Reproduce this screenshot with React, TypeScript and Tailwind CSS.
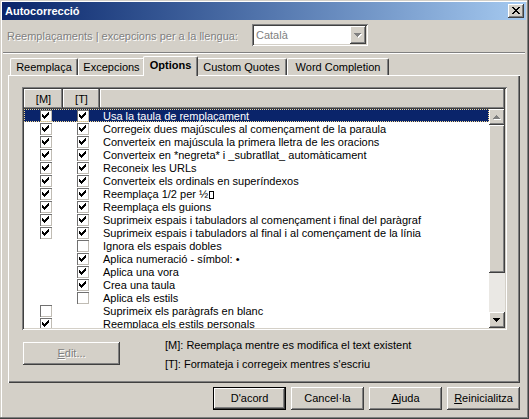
import type { ReactNode } from 'react'

const raised =
  'shadow-[inset_-1px_-1px_#404040,inset_1px_1px_#ffffff,inset_-2px_-2px_#808080,inset_2px_2px_#d4d0c8]'
const sunken =
  'shadow-[inset_1px_1px_#808080,inset_-1px_-1px_#ffffff,inset_2px_2px_#404040,inset_-2px_-2px_#d4d0c8]'
const disabledText = 'text-[#808080] [text-shadow:1px_1px_0_#ffffff]'

type Row = { m: boolean | null; t: boolean | null; label: ReactNode; selected?: boolean }

const rows: Row[] = [
  { m: true, t: true, label: 'Usa la taula de remplaçament', selected: true },
  { m: true, t: true, label: 'Corregeix dues majúscules al començament de la paraula' },
  { m: true, t: true, label: 'Converteix en majúscula la primera lletra de les oracions' },
  { m: true, t: true, label: 'Converteix en *negreta* i _subratllat_ automàticament' },
  { m: true, t: true, label: 'Reconeix les URLs' },
  { m: true, t: true, label: 'Converteix els ordinals en superíndexos' },
  {
    m: true,
    t: true,
    label: (
      <>
        Reemplaça 1/2 per ½
        <span className="ml-px inline-block h-[8px] w-[5px] border border-black bg-white align-[-1px]" />
      </>
    ),
  },
  { m: true, t: true, label: 'Reemplaça els guions' },
  { m: true, t: true, label: 'Suprimeix espais i tabuladors al començament i final del paràgraf' },
  { m: true, t: true, label: 'Suprimeix espais i tabuladors al final i al començament de la línia' },
  { m: null, t: false, label: 'Ignora els espais dobles' },
  { m: null, t: true, label: 'Aplica numeració - símbol: •' },
  { m: null, t: true, label: 'Aplica una vora' },
  { m: null, t: true, label: 'Crea una taula' },
  { m: null, t: false, label: 'Aplica els estils' },
  { m: false, t: null, label: 'Suprimeix els paràgrafs en blanc' },
  { m: true, t: null, label: 'Reemplaça els estils personals' },
]

// classic 7x7 check, one 3px column at a time
const checkCols = [4, 5, 6, 5, 4, 3, 2]

function Check({ on }: { on: boolean | null }) {
  if (on === null) return <div className="w-[12px] shrink-0" />
  return (
    <div className="h-[12px] w-[12px] shrink-0 bg-white shadow-[inset_1px_1px_#707070,inset_-1px_-1px_#c0bcb4]">
      {on && (
        <svg width="12" height="12" viewBox="0 0 12 12" shapeRendering="crispEdges">
          {checkCols.map((y, i) => (
            <rect key={i} x={2 + i} y={y} width="1" height="3" fill="#000" />
          ))}
        </svg>
      )}
    </div>
  )
}

function Arrow({ up, disabled }: { up?: boolean; disabled?: boolean }) {
  const bars = up
    ? [
        [7, 6, 1],
        [6, 7, 3],
        [5, 8, 5],
        [4, 9, 7],
      ]
    : [
        [4, 6, 7],
        [5, 7, 5],
        [6, 8, 3],
        [7, 9, 1],
      ]
  return (
    <svg width="16" height="16" viewBox="0 0 16 16" shapeRendering="crispEdges">
      {disabled &&
        bars.map(([x, y, w], i) => <rect key={'s' + i} x={x + 1} y={y + 1} width={w} height="1" fill="#fff" />)}
      {bars.map(([x, y, w], i) => (
        <rect key={i} x={x} y={y} width={w} height="1" fill={disabled ? '#808080' : '#000'} />
      ))}
    </svg>
  )
}

function Tab({ label, width, active }: { label: string; width: string; active?: boolean }) {
  if (active) {
    return (
      <div
        className={`relative z-10 -mx-[2px] -mb-px flex h-[20px] items-center justify-center rounded-t-[2px] border-l border-t border-white bg-[#d4d0c8] pb-[2px] font-bold shadow-[inset_-1px_0_#808080] [border-right:1px_solid_#404040] ${width}`}
      >
        {label}
      </div>
    )
  }
  return (
    <div
      className={`flex h-[17px] items-center justify-center rounded-t-[2px] border-l border-t border-white pt-px shadow-[inset_-1px_0_#808080] [border-right:1px_solid_#404040] ${width}`}
    >
      {label}
    </div>
  )
}

function Button({ children, isDefault }: { children: ReactNode; isDefault?: boolean }) {
  return (
    <div
      className={`flex h-[23px] w-[73px] items-center justify-center bg-[#d4d0c8] ${raised} ${
        isDefault ? 'border border-black' : ''
      }`}
    >
      {children}
    </div>
  )
}

export default function App() {
  return (
    <div className="h-[419px] w-[529px] overflow-hidden bg-[#d4d0c8] pl-[2px] pr-[3px] pt-[2px] font-['Liberation_Sans',Arial,sans-serif] text-[11px] leading-[13px] text-black shadow-[inset_-1px_-1px_#404040,inset_-2px_-2px_#808080,inset_1px_1px_#d4d0c8,inset_2px_2px_#ffffff]">
      {/* title bar */}
      <div className="flex h-[18px] items-center justify-between bg-linear-to-r from-[#0a246a] to-[#a6caf0] pl-[3px] pr-[2px]">
        <span className="font-bold text-white">Autocorrecció</span>
        <div className={`flex h-[14px] w-[16px] items-center justify-center bg-[#d4d0c8] ${raised}`}>
          <svg width="8" height="7" viewBox="0 0 8 7" shapeRendering="crispEdges" className="-mt-px">
            <path
              d="M0 0h2v1h-2zM6 0h2v1h-2zM1 1h2v1h-2zM5 1h2v1h-2zM2 2h4v1h-4zM3 3h2v1h-2zM2 4h4v1h-4zM1 5h2v1h-2zM5 5h2v1h-2zM0 6h2v1h-2zM6 6h2v1h-2z"
              fill="#000"
            />
          </svg>
        </div>
      </div>

      {/* language row */}
      <div className="mt-[4px] flex h-[22px] items-center">
        <div className={`ml-[5px] mt-[3px] w-[245px] ${disabledText}`}>
          Reemplaçaments | excepcions per a la llengua:
        </div>
        <div className={`flex h-[22px] w-[116px] items-center justify-between bg-white p-[2px] ${sunken}`}>
          <span className="pl-[2px] text-[#808080]">Català</span>
          <div className={`flex h-[18px] w-[16px] items-center justify-center bg-[#d4d0c8] ${raised}`}>
            <Arrow disabled />
          </div>
        </div>
      </div>

      <div className="mx-px mt-[6px] h-[2px] border-b border-t border-b-white border-t-[#808080]" />

      {/* tabs */}
      <div className="ml-[8px] mt-[2px] flex h-[19px] items-end">
        <Tab label="Reemplaça" width="w-[68px]" />
        <Tab label="Excepcions" width="w-[67px]" />
        <Tab label="Options" width="w-[55px]" active />
        <Tab label="Custom Quotes" width="w-[91px]" />
        <Tab label="Word Completion" width="w-[102px]" />
      </div>

      {/* tab panel */}
      <div className="ml-[6px] h-[308px] w-[512px] bg-[#d4d0c8] pt-[12px] shadow-[inset_1px_1px_#ffffff,inset_-1px_-1px_#404040,inset_-2px_-2px_#808080]">
        <div className={`ml-[14px] h-[243px] w-[485px] bg-white p-[2px] ${sunken}`}>
          <div className="flex h-[20px] bg-[#d4d0c8]">
            <div className="flex w-[39px] items-center justify-center shadow-[inset_-1px_-1px_#404040,inset_-2px_-2px_#808080,inset_1px_1px_#ffffff]">
              [M]
            </div>
            <div className="flex w-[37px] items-center justify-center shadow-[inset_-1px_-1px_#404040,inset_-2px_-2px_#808080,inset_1px_1px_#ffffff]">
              [T]
            </div>
            <div className="flex-1 shadow-[inset_-1px_-1px_#404040,inset_-2px_-2px_#808080,inset_1px_1px_#ffffff]" />
          </div>
          <div className="flex h-[219px]">
            <div className="w-[465px] overflow-hidden">
              {rows.map((r, i) => (
                <div
                  key={i}
                  className={`flex h-[13px] items-center whitespace-nowrap ${
                    r.selected
                      ? 'bg-[#0a246a] text-white outline-1 -outline-offset-1 outline-[#f5db95] outline-dotted'
                      : ''
                  }`}
                >
                  <div className="w-[16px] shrink-0" />
                  <Check on={r.m} />
                  <div className="w-[25px] shrink-0" />
                  <Check on={r.t} />
                  <div className="w-[14px] shrink-0" />
                  <span className="pt-px">{r.label}</span>
                </div>
              ))}
            </div>
            <div className="flex w-[16px] flex-col bg-[#eae8e4]">
              <div className={`h-[16px] bg-[#d4d0c8] ${raised}`}>
                <Arrow up disabled />
              </div>
              <div className={`h-[148px] bg-[#d4d0c8] ${raised}`} />
              <div className="flex-1" />
              <div className={`h-[16px] bg-[#d4d0c8] ${raised}`}>
                <Arrow />
              </div>
            </div>
          </div>
        </div>

        <div className="mt-[9px] flex">
          <div className={`ml-[15px] mt-[3px] flex h-[23px] w-[97px] items-center justify-center bg-[#d4d0c8] ${raised}`}>
            <span className={disabledText}>
              <span className="underline">E</span>dit...
            </span>
          </div>
          <div className="ml-[45px]">
            <div className="h-[13px]">[M]: Reemplaça mentre es modifica el text existent</div>
            <div className="mt-[6px] h-[13px]">[T]: Formateja i corregeix mentres s'escriu</div>
          </div>
        </div>
      </div>

      {/* dialog buttons */}
      <div className="mr-[6px] mt-[4px] flex justify-end gap-[5px]">
        <Button isDefault>D'acord</Button>
        <Button>Cancel·la</Button>
        <Button>
          <span>
            <span className="underline">A</span>juda
          </span>
        </Button>
        <Button>
          <span>
            <span className="underline">R</span>einicialitza
          </span>
        </Button>
      </div>
    </div>
  )
}
